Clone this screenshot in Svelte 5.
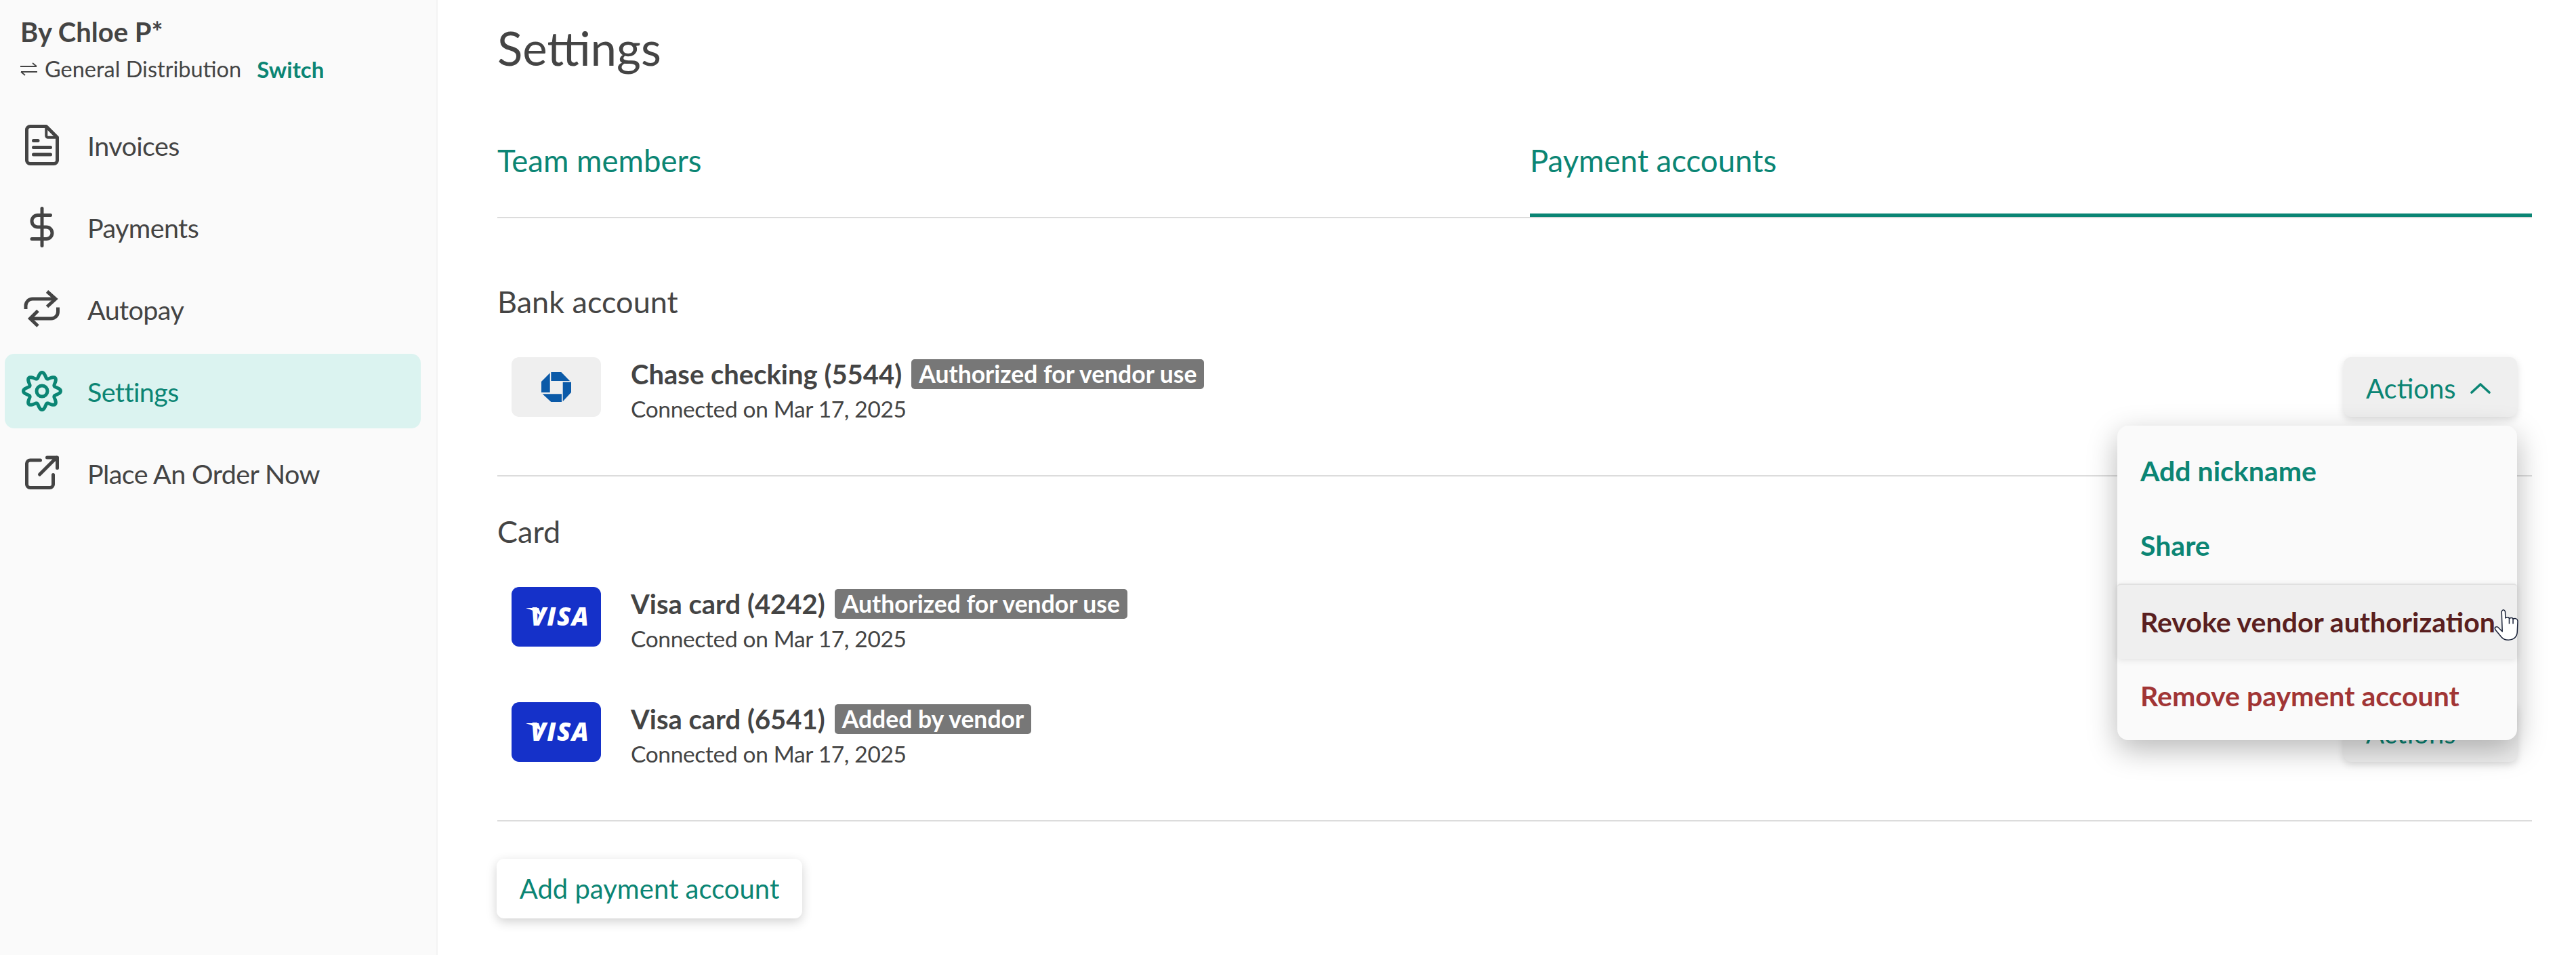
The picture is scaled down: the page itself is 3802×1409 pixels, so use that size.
<script>
  const navItems = [
    { label: "Invoices", icon: "file" },
    { label: "Payments", icon: "dollar" },
    { label: "Autopay", icon: "repeat" },
    { label: "Settings", icon: "gear", active: true },
    { label: "Place An Order Now", icon: "external" },
  ];

  // the first card's button sits fully behind the open menu
  const cards = [
    { name: "Visa card (4242)", badge: "Authorized for vendor use", covered: true },
    { name: "Visa card (6541)", badge: "Added by vendor" },
  ];

  const menuItems = [
    { label: "Add nickname", kind: "plain" },
    { label: "Share", kind: "plain" },
    { label: "Revoke vendor authorization", kind: "hover" },
    { label: "Remove payment account", kind: "danger" },
  ];

  // wavy outline for the cog, eight teeth
  function gearPath() {
    const pts = [];
    for (let i = 0; i < 160; i++) {
      const t = (i / 160) * Math.PI * 2;
      const r = 9.4 + 1.6 * Math.cos(8 * t);
      pts.push(`${(12 + r * Math.sin(t)).toFixed(2)} ${(12 - r * Math.cos(t)).toFixed(2)}`);
    }
    return "M" + pts.join("L") + "Z";
  }
</script>

{#snippet visa()}
  <svg class="logo" viewBox="0 0 132 88">
    <rect width="132" height="88" rx="11" fill="#1531c9" />
    <path d="M21 31 H40 L45 45 C39 38 31 34 21 31Z" fill="#fff" />
    <text x="28" y="57" class="visa-text">VISA</text>
  </svg>
{/snippet}

<div class="shell">
  <aside class="sidebar">
    <div class="org">By Chloe P*</div>
    <div class="dist">
      <svg class="swap" viewBox="0 0 25 20" fill="none" stroke="#444" stroke-width="1.8">
        <path d="M0 6H24M18 1L24 6" />
        <path d="M25 14H1M7 19L1 14" />
      </svg>
      <span>General Distribution</span>
      <a class="switch" href="#switch">Switch</a>
    </div>
    <nav>
      {#each navItems as item}
        <div class="nav-item" class:active={item.active}>
          <svg class="nav-icon" viewBox="0 0 24 24" fill="none" stroke="currentColor" stroke-width="2" stroke-linecap="round" stroke-linejoin="round">
            {#if item.icon === "file"}
              <path d="M5 1H14.5L21 7.5V21a2 2 0 0 1-2 2H5a2 2 0 0 1-2-2V3a2 2 0 0 1 2-2z" />
              <path d="M14.5 1.5V6.5a1 1 0 0 0 1 1H20.5" stroke-width="1.6" />
              <path d="M7 9.4H9.6M7 13.4H17M7 17.6H17" />
            {:else if item.icon === "dollar"}
              <path d="M12 1V23" />
              <path d="M17 5H9.5a3.5 3.5 0 0 0 0 7h5a3.5 3.5 0 0 1 0 7H6" />
            {:else if item.icon === "repeat"}
              <path d="M2.4 12V10a4 4 0 0 1 4-4H20" stroke-linecap="butt" />
              <path d="M15 1.6L20 6L15 10.6" stroke-linecap="butt" stroke-linejoin="miter" />
              <path d="M21.4 11V13.6a4 4 0 0 1-4 4H5" stroke-linecap="butt" />
              <path d="M9.6 13L5 17.6L9.6 22" stroke-linecap="butt" stroke-linejoin="miter" />
            {:else if item.icon === "gear"}
              <path d={gearPath()} />
              <circle cx="12" cy="12" r="3.2" />
            {:else}
              <path d="M11 4.4H5a2 2 0 0 0-2 2V18.6a2 2 0 0 0 2 2H16.6a2 2 0 0 0 2-2V13" />
              <path d="M10.6 12.8L20.6 2.8M15 2.8H21V9" />
            {/if}
          </svg>
          <span>{item.label}</span>
        </div>
      {/each}
    </nav>
  </aside>

  <main class="main">
    <h1>Settings</h1>

    <div class="tabs">
      <div class="tab">Team members</div>
      <div class="tab selected">Payment accounts</div>
    </div>

    <section class="bank">
      <h2>Bank account</h2>
      <div class="row">
        <svg class="logo" viewBox="0 0 132 88">
          <rect width="132" height="88" rx="11" fill="#efefef" />
          <g transform="translate(44 22)" fill="#0b5aa8">
            <path d="M14.3 0H29.3L42 13H14.3Z" />
            <path d="M31.7 14.7H44V30L31.7 43.3Z" />
            <path d="M1.7 32.3H30V44H14.3Z" />
            <path d="M12.7 1.3V30H0V14Z" />
          </g>
        </svg>
        <div class="info">
          <div class="name">Chase checking (5544)<span class="badge">Authorized for vendor use</span></div>
          <div class="sub">Connected on Mar 17, 2025</div>
        </div>
        <div class="action-wrap">
          <button class="actions"><span>Actions</span>
            <svg class="chev" viewBox="0 0 30 18" fill="none" stroke="currentColor" stroke-width="3.6" stroke-linecap="round" stroke-linejoin="round"><path d="M2 15L15 3L28 15" /></svg>
          </button>
          <div class="menu">
            {#each menuItems as m}
              <div class="menu-item {m.kind}">
                {m.label}
                {#if m.kind === "hover"}
                  <svg class="hand" viewBox="240 110 115 145">
                    <path d="M277 122q8-14 16 0L294 152q8-6 15-2q2 2 2 4q8-5 15-2l2 4q8-4 14-1q6 2 7 10L347 210q0 38-40 40q-20 0-30-12L250 205q-6-8 0-13q8-4 14 4L280 212z" fill="#fff" stroke="#1a2238" stroke-width="4.5" stroke-linejoin="round" />
                    <path d="M311 152V178M328 154V178" fill="none" stroke="#1a2238" stroke-width="4.5" />
                  </svg>
                {/if}
              </div>
            {/each}
          </div>
        </div>
      </div>
    </section>

    <section class="card">
      <h2>Card</h2>
      {#each cards as c}
        <div class="row">
          {@render visa()}
          <div class="info">
            <div class="name">{c.name}<span class="badge">{c.badge}</span></div>
            <div class="sub">Connected on Mar 17, 2025</div>
          </div>
          {#if !c.covered}
            <div class="action-wrap">
              <button class="actions"><span>Actions</span></button>
            </div>
          {/if}
        </div>
      {/each}
    </section>

    <button class="add">Add payment account</button>
  </main>
</div>

<style>
  :global(body) {
    margin: 0;
    background: #fff;
    overflow: hidden;
  }

  .shell {
    display: flex;
    height: 1409px;
    overflow: hidden;
    font-family: Lato, "Open Sans", sans-serif;
    color: #444;
    font-size: 40px;
  }

  .sidebar {
    width: 644px;
    flex: none;
    background: #fafafa;
    border-right: 2px solid #f3f3f3;
    padding-top: 24px;
  }

  .org {
    margin-left: 30px;
    font-size: 40px;
    font-weight: 700;
    line-height: 46px;
  }

  .dist {
    display: flex;
    align-items: center;
    margin: 9px 0 0 30px;
    font-size: 32.5px;
    line-height: 46px;
  }

  .swap {
    width: 25px;
    height: 20px;
    margin-right: 11px;
  }

  .switch {
    margin-left: 23px;
    font-size: 33px;
    color: #0b8574;
    font-weight: 700;
    text-decoration: none;
  }

  nav {
    display: flex;
    flex-direction: column;
    gap: 11px;
    margin: 34px 23px 0 7px;
  }

  .nav-item {
    display: flex;
    align-items: center;
    height: 110px;
    padding-left: 25px;
    border-radius: 14px;
    font-size: 39.5px;
    letter-spacing: -0.6px;
  }

  .nav-item.active {
    background: #dbf3f0;
    color: #0b8574;
  }

  .nav-icon {
    width: 60px;
    height: 60px;
    margin-right: 37px;
  }

  .main {
    flex: 1;
    min-width: 0;
    padding: 24px 65px 0 88px;
  }

  h1 {
    margin: 0;
    font-size: 69px;
    font-weight: 400;
    line-height: 94px;
  }

  .tabs {
    display: grid;
    grid-template-columns: 1524fr 1479fr;
    margin-top: 37px;
    border-bottom: 2px solid #dcdcdc;
  }

  .tab {
    height: 165px;
    box-sizing: border-box;
    padding-top: 54px;
    font-size: 45.5px;
    line-height: 56px;
    color: #0b8574;
  }

  .tab.selected {
    border-bottom: 5px solid #0b8574;
    margin-bottom: -2px;
  }

  section {
    padding-bottom: 86px;
    border-bottom: 2px solid #dcdcdc;
  }

  section.bank {
    padding-top: 93px;
  }

  section.card {
    padding-top: 51px;
  }

  h2 {
    margin: 0 0 52px;
    font-size: 45px;
    font-weight: 400;
    line-height: 60px;
  }

  .row {
    display: flex;
    height: 88px;
    margin: 0 22px 0 21px;
  }

  .row + .row {
    margin-top: 82px;
  }

  .logo {
    width: 132px;
    height: 88px;
    flex: none;
  }

  .visa-text {
    font-family: "Open Sans", sans-serif;
    font-size: 37px;
    font-weight: 800;
    font-style: italic;
    letter-spacing: 1.5px;
    fill: #fff;
  }

  .info {
    flex: 1;
    margin-left: 44px;
  }

  .name {
    display: flex;
    align-items: center;
    font-weight: 700;
    line-height: 50px;
  }

  .badge {
    display: inline-block;
    height: 44px;
    margin-left: 14px;
    padding: 0 11px;
    border-radius: 5px;
    background: #777;
    color: #fff;
    font-size: 35.5px;
    line-height: 44px;
  }

  .sub {
    margin-top: 1px;
    font-size: 33.5px;
    letter-spacing: -0.35px;
    line-height: 50px;
  }

  .action-wrap {
    position: relative;
  }

  button {
    font-family: inherit;
    font-size: 40px;
    color: #0b8574;
    border: none;
    cursor: pointer;
  }

  .actions {
    display: flex;
    align-items: center;
    gap: 21px;
    width: 256px;
    height: 88px;
    padding: 3px 0 0 33px;
    border-radius: 11px;
    background: #efefef;
    box-shadow: 0 4px 12px rgba(0, 0, 0, 0.14);
  }

  .chev {
    width: 30px;
    height: 18px;
  }

  .menu {
    position: absolute;
    top: 101px;
    right: 0;
    z-index: 5;
    width: 590px;
    height: 464px;
    box-sizing: border-box;
    padding: 12px 0 11px;
    border-radius: 16px;
    background: #fafafa;
    box-shadow: 0 14px 44px rgba(0, 0, 0, 0.28);
  }

  .menu-item {
    position: relative;
    height: 110px;
    padding-left: 34px;
    font-size: 41px;
    line-height: 110px;
    font-weight: 700;
    color: #0b8574;
    white-space: nowrap;
  }

  .menu-item.hover {
    margin-top: 1px;
    border-top: 2px solid #e0e0e0;
    height: 109px;
    line-height: 109px;
    border-radius: 5px;
    background: #efefef;
    color: #5a1f20;
    box-shadow: 0 2px 10px rgba(0, 0, 0, 0.1);
  }

  .menu-item.danger {
    color: #a13535;
  }

  .hand {
    position: absolute;
    left: 555px;
    top: 35px;
    width: 38px;
    height: 48px;
  }

  .add {
    display: block;
    width: 451px;
    height: 88px;
    margin-top: 55px;
    margin-left: -1px;
    padding: 0;
    border-radius: 11px;
    background: #fff;
    box-shadow: 0 5px 16px rgba(0, 0, 0, 0.18);
  }
</style>
